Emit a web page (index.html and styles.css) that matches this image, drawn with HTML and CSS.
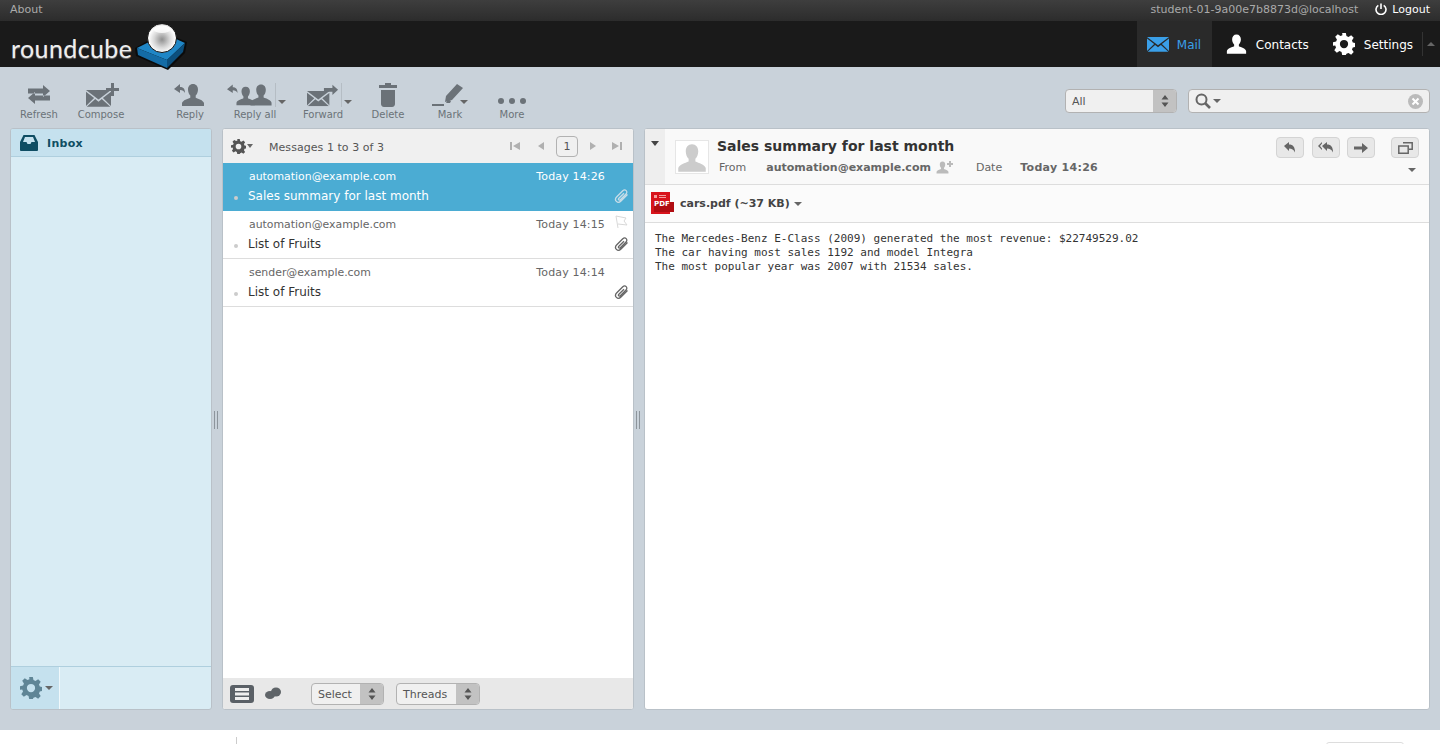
FILE: index.html
```html
<!DOCTYPE html>
<html lang="en">
<head>
    <meta charset="UTF-8">
    <title>Roundcube Webmail :: Inbox</title>
    <link rel="stylesheet" href="styles.css">
</head>
<body>

<svg class="defs" width="0" height="0">
    <defs>
        <symbol id="person" viewBox="0 0 24 24">
            <path d="M12 1c3.200 0 5 2.400 5 5.500 0 2.600-1 4.800-2.300 6v2.200c2.800 1.200 7.300 2.300 8.300 5.300v3H1v-3c1-3 5.500-4.100 8.300-5.300v-2.200C8 11.300 7 9.100 7 6.500 7 3.400 8.800 1 12 1z"/>
        </symbol>
        <symbol id="envelope" viewBox="0 0 34 24">
            <path d="M0 1h34L17 14z"/>
            <path d="M0 3.500V23l11-11zM34 3.500V23L23 12zM12.500 13.500L17 17l4.500-3.500L33 24H1z"/>
        </symbol>
        <symbol id="gear" viewBox="0 0 24 24">
            <path d="M10 0h4l.7 3.400 2.200.9 2.900-1.900 2.800 2.800-1.900 2.900.9 2.200 3.400.7v4l-3.400.7-.9 2.200 1.900 2.900-2.800 2.800-2.900-1.900-2.200.9L14 24h-4l-.7-3.400-2.200-.9-2.900 1.900-2.800-2.800 1.900-2.900-.9-2.200L0 14v-4l3.400-.7.900-2.200-1.900-2.900 2.800-2.800 2.900 1.900 2.200-.9zM12 7.500a4.500 4.500 0 1 0 0 9 4.500 4.500 0 0 0 0-9z" fill-rule="evenodd"/>
        </symbol>
        <symbol id="clip" viewBox="0 0 16 16">
            <path d="M13.500 6.500L7 13c-1.500 1.500-3.500 1.500-4.600.4S1.300 10.300 2.800 8.800l6-6c1-1 2.500-1.100 3.400-.2s.8 2.400-.2 3.400L6.300 11.700c-.5.5-1.200.6-1.600.2s-.3-1.100.2-1.600L10 5.200" fill="none" stroke="currentColor" stroke-width="1.300"/>
        </symbol>
        <symbol id="stepper" viewBox="0 0 8 12">
            <path d="M4 0l3.500 4.500h-7zM4 12L.5 7.500h7z"/>
        </symbol>
    </defs>
</svg>

<div class="topline">
    <a class="topline-link">About</a>
    <div class="topline-right">
        <span class="username">student-01-9a00e7b8873d@localhost</span>
        <a class="logout">
            <svg width="12" height="12" viewBox="0 0 12 12"><path d="M3.300 2.300a5 5 0 1 0 5.400 0M6 .5v5.500" fill="none" stroke="#fff" stroke-width="1.600"/></svg>
            Logout
        </a>
    </div>
</div>

<header class="header">
    <div class="logo">
        <span class="logo-text">roundcube</span>
        <svg class="logo-cube" width="52" height="50" viewBox="0 0 52 50">
            <defs>
                <radialGradient id="ball" cx="0.5" cy="0.55" r="0.55">
                    <stop offset="0" stop-color="#8f8f8f"/>
                    <stop offset="0.5" stop-color="#d8d8d8"/>
                    <stop offset="0.85" stop-color="#ffffff"/>
                    <stop offset="1" stop-color="#b0b0b0"/>
                </radialGradient>
            </defs>
            <path d="M0 24L28 8 52 18 50 29 33 46 1 32z" fill="#0b0b0b"/>
            <path d="M2 24L30 10 50 19 32 36z" fill="#1f86c6"/>
            <path d="M2 24L32 36 32 44 3 31z" fill="#146ca6"/>
            <path d="M32 36L50 19 48 28 32 44z" fill="#0c4f7d"/>
            <circle cx="27" cy="14" r="14.500" fill="url(#ball)" stroke="#111" stroke-width="1"/>
            <ellipse cx="27" cy="6" rx="8" ry="3" fill="#ffffff" opacity="0.75"/>
        </svg>
    </div>
    <nav class="taskbar">
        <a class="task task-mail">
            <svg width="22" height="16"><use href="#envelope"/></svg>
            Mail
        </a>
        <a class="task task-contacts">
            <svg width="21" height="22"><use href="#person"/></svg>
            Contacts
        </a>
        <a class="task task-settings">
            <svg width="22" height="22"><use href="#gear"/></svg>
            Settings
        </a>
        <span class="task-toggle"></span>
    </nav>
</header>

<div class="toolbar">
    <div class="toolbar-group">
        <a class="tool">
            <svg width="26" height="24" viewBox="0 0 26 24"><path d="M2 5.500h15V2l7 6-7 6v-3.500H2zM24 12.500H9V9L2 15l7 6v-3.500h15z"/></svg>
            Refresh
        </a>
        <a class="tool">
            <svg class="compose-icon" width="34" height="24" viewBox="0 0 34 24"><use href="#envelope" x="0" y="6" width="25" height="18"/><path d="M25 0h3v5h5v3h-5v5h-3V8h-5V5h5z"/></svg>
            Compose
        </a>
    </div>
    <div class="toolbar-group toolbar-mail">
        <a class="tool">
            <svg width="32" height="24" viewBox="0 0 32 24"><use href="#person" x="6" y="0" width="26" height="24"/><path d="M0 6l6-5v3c3 0 5 1.500 5 6-1-2-2.500-3-5-3v3z"/></svg>
            Reply
        </a>
        <a class="tool tool-wide">
            <span class="tool-row tool-row-replyall">
                <svg width="46" height="24" viewBox="0 0 48 24"><use href="#person" x="9" y="2" width="21" height="22"/><use href="#person" x="23" y="0" width="25" height="24"/><path d="M0 6l6-5v3c3 0 5 1.500 5 6-1-2-2.500-3-5-3v3z"/></svg>
                <i class="tool-sep"></i>
                <i class="caret tool-caret"></i>
            </span>
            Reply all
        </a>
        <a class="tool tool-wide">
            <span class="tool-row tool-row-forward">
                <svg width="32" height="24" viewBox="0 0 34 24"><use href="#envelope" x="0" y="7" width="24" height="17"/><path d="M18 4.500h9V1l6 5.500-6 5.500V8.500h-9z"/></svg>
                <i class="tool-sep"></i>
                <i class="caret tool-caret"></i>
            </span>
            Forward
        </a>
        <a class="tool">
            <svg width="20" height="24" viewBox="0 0 20 24"><path d="M7 0h6v2h6v3H1V2h6zM3 7h14v14c0 1.500-1 3-3 3H6c-2 0-3-1.500-3-3z"/></svg>
            Delete
        </a>
        <a class="tool">
            <span class="tool-row tool-row-mark">
                <svg width="34" height="24" viewBox="0 0 34 24"><path d="M0 21h12v2H0zM13 19l1-6L25 1l6 4-11 12zM14 20l2-3 3 1-1 2z"/></svg>
                <i class="caret tool-caret"></i>
            </span>
            Mark
        </a>
        <a class="tool">
            <svg width="30" height="24" viewBox="0 0 30 24"><circle cx="4" cy="18" r="3"/><circle cx="15" cy="18" r="3"/><circle cx="26" cy="18" r="3"/></svg>
            More
        </a>
    </div>
    <div class="toolbar-search">
        <div class="select select-filter">
            <span class="select-value">All</span>
            <span class="select-arrows"><svg width="8" height="12"><use href="#stepper"/></svg></span>
        </div>
        <div class="searchbox">
            <svg width="17" height="16" viewBox="0 0 17 16"><circle cx="6.500" cy="6.500" r="5" fill="none" stroke="#666" stroke-width="2"/><path d="M10 10l5 5" stroke="#666" stroke-width="2.600"/></svg>
            <i class="caret"></i>
            <span class="search-reset">
                <svg width="15" height="15" viewBox="0 0 15 15"><circle cx="7.500" cy="7.500" r="7.500" fill="#bbb"/><path d="M4.500 4.500l6 6M10.500 4.500l-6 6" stroke="#fff" stroke-width="2"/></svg>
            </span>
        </div>
    </div>
</div>

<main class="main">
    <aside class="panel folders">
        <div class="folder-row">
            <svg width="18" height="16" viewBox="0 0 18 16"><path d="M3.500 0h11L18 7v8c0 .5-.5 1-1 1H1c-.5 0-1-.5-1-1V7zM5 2L3 7h3.500l1 2h3l1-2H15l-2-5z" fill="#0f4d63" fill-rule="evenodd"/></svg>
            <span class="folder-name">Inbox</span>
        </div>
        <div class="grow"></div>
        <div class="folders-footer">
            <a class="folders-gear">
                <svg width="22" height="22"><use href="#gear"/></svg>
                <i class="caret"></i>
            </a>
        </div>
    </aside>

    <div class="splitter"><i></i></div>

    <section class="panel list">
        <div class="list-header">
            <svg class="list-gear" width="15" height="15"><use href="#gear"/></svg>
            <i class="caret"></i>
            <span class="list-count">Messages 1 to 3 of 3</span>
            <div class="pager">
                <svg width="10" height="10" viewBox="0 0 10 10"><path d="M0 1h2v8H0zM10 1v8L3 5z"/></svg>
                <svg class="pager-prev" width="8" height="10" viewBox="0 0 8 10"><path d="M7 1v8L1 5z"/></svg>
                <span class="page-num">1</span>
                <svg width="8" height="10" viewBox="0 0 8 10"><path d="M1 1v8l6-4z"/></svg>
                <svg class="pager-last" width="10" height="10" viewBox="0 0 10 10"><path d="M10 1H8v8h2zM0 1v8l7-4z"/></svg>
            </div>
        </div>
        <div class="messages">
            <div class="message selected">
                <div class="message-top">
                    <span class="sender">automation@example.com</span>
                    <span class="date">Today 14:26</span>
                </div>
                <div class="message-bottom">
                    <i class="dot"></i>
                    <span class="subject">Sales summary for last month</span>
                    <svg class="clip" width="16" height="16"><use href="#clip"/></svg>
                </div>
            </div>
            <div class="message">
                <div class="message-top">
                    <span class="sender">automation@example.com</span>
                    <span class="date">Today 14:15</span>
                    <svg class="flag" width="14" height="14" viewBox="0 0 14 14"><path d="M2 1l10 2-2 3 3 4-9-1M2 1l2 12" fill="none" stroke="#d8d8d8"/></svg>
                </div>
                <div class="message-bottom">
                    <i class="dot"></i>
                    <span class="subject">List of Fruits</span>
                    <svg class="clip" width="16" height="16"><use href="#clip"/></svg>
                </div>
            </div>
            <div class="message">
                <div class="message-top">
                    <span class="sender">sender@example.com</span>
                    <span class="date">Today 14:14</span>
                </div>
                <div class="message-bottom">
                    <i class="dot"></i>
                    <span class="subject">List of Fruits</span>
                    <svg class="clip" width="16" height="16"><use href="#clip"/></svg>
                </div>
            </div>
        </div>
        <div class="list-footer">
            <span class="view-list">
                <svg width="14" height="12" viewBox="0 0 14 12"><path d="M0 0h14v3H0zM0 4.500h14v3H0zM0 9h14v3H0z" fill="#eee"/></svg>
            </span>
            <svg class="view-thread" width="16" height="13" viewBox="0 0 16 13"><ellipse cx="5" cy="8" rx="5" ry="4"/><ellipse cx="11" cy="5" rx="5" ry="4.500"/></svg>
            <div class="select select-small select-select">
                <span class="select-value">Select</span>
                <span class="select-arrows"><svg width="8" height="12"><use href="#stepper"/></svg></span>
            </div>
            <div class="select select-small select-threads">
                <span class="select-value">Threads</span>
                <span class="select-arrows"><svg width="8" height="12"><use href="#stepper"/></svg></span>
            </div>
        </div>
    </section>

    <div class="splitter"><i></i></div>

    <section class="panel content">
        <div class="mail-header">
            <div class="collapse"><i class="caret caret-dark"></i></div>
            <div class="photo">
                <svg width="30" height="30" viewBox="0 0 24 24"><use href="#person" fill="#ccc"/></svg>
            </div>
            <div class="mail-meta">
                <h2 class="mail-subject">Sales summary for last month</h2>
                <div class="mail-from">
                    <span class="meta-label">From</span>
                    <span class="meta-value meta-sender">automation@example.com</span>
                    <svg class="add-contact" width="18" height="15" viewBox="0 0 18 15"><use href="#person" width="13" height="15"/><path d="M13 1h2v2h2v2h-2v2h-2V5h-2V3h2z"/></svg>
                    <span class="meta-label meta-date">Date</span>
                    <span class="meta-value meta-when">Today 14:26</span>
                </div>
            </div>
            <div class="mail-actions">
                <div class="mail-buttons">
                    <a class="action"><svg width="12" height="11" viewBox="0 0 12 11"><path d="M0 4l5-4v2.500c4 0 6 2.500 6 8-1.500-3-3-4-6-4V9z"/></svg></a>
                    <a class="action"><svg width="16" height="11" viewBox="0 0 16 11"><path d="M0 4l4-4v1.500L2 4l2 2.500V8zM4 4l5-4v2.500c4 0 6 2.500 6 8-1.500-3-3-4-6-4V9z"/></svg></a>
                    <a class="action action-forward"><svg width="14" height="10" viewBox="0 0 14 10"><path d="M0 3.500h8V0l6 5-6 5V6.500H0z"/></svg></a>
                    <a class="action action-open"><svg width="15" height="12" viewBox="0 0 15 12"><path d="M5 .8h9.200v6.500H11M.8 4H10.200v7.200H.8z" fill="none" stroke="#666" stroke-width="1.500"/></svg></a>
                </div>
                <i class="caret more-headers"></i>
            </div>
        </div>
        <div class="attachment">
            <svg width="23" height="23" viewBox="0 0 23 23">
                <path d="M0 0h19v22H0z" fill="#d8141c"/>
                <path d="M3 3h3v3H3zM8 3h7v1H8zM8 5h7v1H8z" fill="#f3a0a0"/>
                <path d="M3 10h20v10H3z" fill="#b00d12"/>
            </svg>
            <span class="pdf-tag">PDF</span>
            <span class="attachment-name">cars.pdf (~37 KB)</span>
            <i class="caret"></i>
        </div>
        <pre class="mail-body">The Mercedes-Benz E-Class (2009) generated the most revenue: $22749529.02
The car having most sales 1192 and model Integra
The most popular year was 2007 with 21534 sales.</pre>
    </section>
</main>

<div class="page-bottom">
    <i class="bottom-line"></i>
    <i class="bottom-button"></i>
</div>

</body>
</html>
```

FILE: styles.css
```css
/* General */
html, body {
    height: 100%;
}

body {
    margin: 0;
    background-color: #c9d2da;
    color: #333;
    font-family: "DejaVu Sans", Verdana, sans-serif;
    font-size: 11px;
    overflow: hidden;
    display: flex;
    flex-direction: column;
}

svg {
    display: block;
    fill: currentColor;
}

.defs {
    position: absolute;
}

.grow {
    flex: 1;
}

.caret {
    display: block;
    width: 0;
    height: 0;
    border-left: 4px solid transparent;
    border-right: 4px solid transparent;
    border-top: 4px solid #666;
}

/* Top line */
.topline {
    height: 21px;
    box-sizing: border-box;
    padding: 0 10px 3px;
    display: flex;
    justify-content: space-between;
    align-items: center;
    background: linear-gradient(#3e3e3e, #2c2c2c);
    color: #aaa;
    flex-shrink: 0;
}

.topline-right {
    display: flex;
    align-items: center;
    gap: 17px;
}

.logout {
    display: flex;
    align-items: center;
    gap: 5px;
    color: #fff;
}

/* Header */
.header {
    height: 46px;
    background-color: #1a1a1a;
    display: flex;
    justify-content: space-between;
    flex-shrink: 0;
    position: relative;
}

.logo {
    display: flex;
    padding-left: 11px;
    align-items: center;
    color: #eee;
}

.logo-text {
    font-family: Lato, sans-serif;
    font-weight: 400;
    font-size: 25px;
    letter-spacing: 0.4px;
    margin-top: 7px;
    text-shadow: 0 1px 1px #777;
}

.logo-cube {
    position: absolute;
    left: 135px;
    top: 3px;
    z-index: 1;
}

.taskbar {
    display: flex;
    color: #fff;
    font-size: 12px;
}

.task {
    display: flex;
    align-items: center;
    padding-top: 2px;
}

.task svg {
    margin-top: -2px;
}

.task-mail {
    width: 75px;
    box-sizing: border-box;
    padding-left: 10px;
    gap: 8px;
    background-color: #2a2a2a;
    color: #3a9fe8;
}

.task-contacts {
    padding-left: 14px;
    gap: 9px;
}

.task-settings {
    margin-left: 24px;
    gap: 9px;
}

.task-toggle {
    width: 17px;
    margin: 11px 0 11px 9px;
    position: relative;
    border-left: 1px solid #333;
}

.task-toggle::after {
    content: "";
    position: absolute;
    left: 4px;
    top: 10px;
    border-left: 4px solid transparent;
    border-right: 4px solid transparent;
    border-bottom: 4px solid #666;
}

/* Toolbar */
.toolbar {
    height: 61px;
    padding-left: 8px;
    padding-right: 10px;
    display: flex;
    flex-shrink: 0;
    color: #6b7278;
}

.toolbar-group {
    display: flex;
}

.toolbar-mail {
    margin-left: 27px;
}

.tool {
    width: 62px;
    height: 61px;
    box-sizing: border-box;
    padding-top: 16px;
    display: flex;
    flex-direction: column;
    align-items: center;
    gap: 2px;
    font-size: 10px;
}

.tool-wide {
    width: 68px;
}

.compose-icon {
    margin-left: 4px;
}

.tool-row {
    display: flex;
    position: relative;
}

.tool-row-replyall {
    margin-left: 2px;
}

.tool-row-forward {
    margin-left: 12px;
}

.tool-sep {
    display: block;
    width: 1px;
    height: 24px;
    background-color: #b5bdc4;
    margin-left: 2px;
}

.tool-caret {
    margin-left: 2px;
    align-self: flex-end;
    margin-bottom: 3px;
}

.tool-row-mark .tool-caret {
    margin-left: -6px;
}

.toolbar-search {
    margin-left: auto;
    display: flex;
    gap: 11px;
    padding-top: 22px;
    align-items: flex-start;
}

/* Selects */
.select {
    display: flex;
    box-sizing: border-box;
    height: 24px;
    border: 1px solid #b2b2b2;
    border-radius: 4px;
    background-color: #f0f0f0;
    overflow: hidden;
    color: #555;
}

.select-filter {
    width: 112px;
}

.select-value {
    flex: 1;
    padding-left: 6px;
    line-height: 23px;
}

.select-arrows {
    width: 23px;
    background-color: #c2c2c2;
    display: flex;
    align-items: center;
    justify-content: center;
    color: #555;
}

.searchbox {
    width: 242px;
    height: 24px;
    box-sizing: border-box;
    border: 1px solid #b2b2b2;
    border-radius: 4px;
    background-color: #f0f0f0;
    display: flex;
    align-items: center;
    padding-left: 6px;
    gap: 1px;
}

.search-reset {
    margin-left: auto;
    margin-right: 6px;
}

/* Panels */
.main {
    height: 582px;
    padding: 0 10px;
    display: flex;
    flex-shrink: 0;
}

.panel {
    box-sizing: border-box;
    border: 1px solid #b9c1c8;
    border-radius: 3px;
    display: flex;
    flex-direction: column;
    overflow: hidden;
    background-color: #fff;
}

.splitter {
    width: 10px;
    padding-top: 2px;
    box-sizing: border-box;
    display: flex;
    align-items: center;
    justify-content: center;
}

.splitter i {
    display: block;
    width: 2px;
    height: 18px;
    margin-right: 3px;
    border-left: 1px solid #8d959c;
    border-right: 1px solid #8d959c;
}

/* Folders */
.folders {
    width: 202px;
    background-color: #d9ecf4;
}

.folder-row {
    height: 28px;
    background-color: #c5e1ee;
    border-bottom: 1px solid #afcfde;
    box-sizing: border-box;
    display: flex;
    align-items: center;
    gap: 9px;
    padding-left: 9px;
    color: #0f4d63;
    font-weight: bold;
}

.folder-name {
    letter-spacing: 0.3px;
    padding-top: 2px;
}

.folders-footer {
    height: 43px;
    border-top: 1px solid #afcfde;
    box-sizing: border-box;
    flex-shrink: 0;
}

.folders-gear {
    width: 49px;
    height: 100%;
    background-color: #c5e1ee;
    border-right: 1px solid #f0f8fb;
    box-sizing: border-box;
    display: flex;
    align-items: center;
    padding-left: 9px;
    gap: 3px;
    color: #5f8596;
}

/* Message list */
.list {
    width: 412px;
}

.list-header {
    height: 34px;
    flex-shrink: 0;
    background-color: #f0f0f0;
    display: flex;
    align-items: center;
    padding-left: 8px;
    color: #555;
}

.list-gear {
    margin-right: 1px;
}

.list-header .caret {
    border-left-width: 3.500px;
    border-right-width: 3.500px;
}

.list-count {
    margin-left: 16px;
    padding-top: 2px;
    letter-spacing: 0.05px;
}

.pager {
    margin-left: auto;
    margin-right: 11px;
    display: flex;
    align-items: center;
    color: #b0b0b0;
}

.pager-prev {
    margin: 0 11px 0 17px;
}

.pager-last {
    margin-left: 15px;
}

.page-num {
    width: 22px;
    height: 21px;
    border: 1px solid #b2b2b2;
    border-radius: 4px;
    box-sizing: border-box;
    text-align: center;
    line-height: 20px;
    color: #555;
    margin-right: 11px;
}

.messages {
    flex: 1;
}

.message {
    height: 48px;
    box-sizing: border-box;
    border-bottom: 1px solid #ddd;
    padding-top: 6px;
    color: #666;
}

.message-top {
    display: flex;
    align-items: center;
    position: relative;
    padding-left: 26px;
    line-height: 14px;
    font-size: 10.9px;
}

.date {
    margin-left: auto;
    margin-right: 28px;
    padding-top: 1px;
    font-size: 11px;
    letter-spacing: 0.15px;
}

.flag {
    position: absolute;
    right: 5px;
    top: -2px;
}

.message-bottom {
    display: flex;
    align-items: center;
    margin-top: 3px;
    padding-left: 11px;
}

.dot {
    display: block;
    width: 4px;
    height: 4px;
    border-radius: 50%;
    background-color: #ccc;
    margin-top: 4px;
}

.subject {
    margin-left: 10px;
    font-size: 12px;
    color: #333;
    line-height: 18px;
}

.clip {
    margin-left: auto;
    margin-right: 3px;
    color: #666;
}

.selected {
    background-color: #4bacd3;
    color: #fff;
    border-bottom-color: #4bacd3;
}

.selected .subject {
    color: #fff;
}

.selected .clip {
    color: #c7dde8;
}

.list-footer {
    height: 31px;
    flex-shrink: 0;
    background-color: #e8e8e8;
    display: flex;
    align-items: center;
    padding-left: 7px;
    color: #5f6468;
}

.view-list {
    width: 24px;
    height: 18px;
    background-color: #5a6066;
    border-radius: 3px;
    display: flex;
    align-items: center;
    justify-content: center;
}

.view-thread {
    margin-left: 11px;
}

.select-small {
    height: 22px;
}

.select-small .select-value {
    line-height: 21px;
}

.select-select {
    width: 73px;
    margin-left: 30px;
}

.select-threads {
    width: 84px;
    margin-left: 12px;
}

/* Message content */
.content {
    width: 786px;
}

.mail-header {
    flex-shrink: 0;
    display: flex;
    background-color: #f9f9f9;
    border-bottom: 1px solid #ddd;
    box-sizing: border-box;
    height: 56px;
}

.collapse {
    width: 20px;
    background-color: #eee;
    padding: 12px 0 0 6px;
    box-sizing: border-box;
}

.caret-dark {
    border-top-color: #444;
    border-top-width: 5px;
}

.photo {
    width: 34px;
    height: 34px;
    box-sizing: border-box;
    margin: 11px 8px 0 10px;
    border: 1px solid #e6e6e6;
    background-color: #fff;
    display: flex;
    align-items: flex-end;
    justify-content: center;
}

.mail-meta {
    flex: 1;
    padding-top: 8px;
}

.mail-subject {
    margin: 0;
    font-size: 14px;
    line-height: 18px;
    color: #333;
    font-weight: bold;
}

.mail-from {
    display: flex;
    align-items: center;
    margin-top: 5px;
    margin-left: 2px;
    color: #666;
}

.meta-sender {
    margin-left: 20px;
}

.meta-value {
    font-weight: bold;
}

.meta-when {
    letter-spacing: 0.3px;
}

.add-contact {
    margin-left: 5px;
    color: #bbb;
}

.meta-date {
    margin-left: 22px;
    margin-right: 18px;
}

.mail-actions {
    width: 160px;
    position: relative;
}

.mail-buttons {
    display: flex;
    gap: 8px;
    padding-top: 8px;
    padding-left: 7px;
}

.action {
    width: 28px;
    height: 21px;
    box-sizing: border-box;
    border: 1px solid #d4d4d4;
    border-radius: 4px;
    background-color: #e8e8e8;
    display: flex;
    align-items: center;
    justify-content: center;
    color: #666;
}

.action-forward {
    margin-left: -1px;
}

.action-open {
    margin-left: 8px;
}

.more-headers {
    position: absolute;
    right: 13px;
    top: 39px;
}

.attachment {
    height: 38px;
    box-sizing: border-box;
    flex-shrink: 0;
    border-bottom: 1px solid #ddd;
    background-color: #fbfbfb;
    display: flex;
    align-items: center;
    padding-left: 6px;
    position: relative;
    color: #444;
    font-weight: bold;
}

.pdf-tag {
    position: absolute;
    left: 9px;
    top: 14px;
    color: #fff;
    font-size: 7px;
    line-height: 10px;
}

.attachment-name {
    margin-left: 6px;
    margin-right: 4px;
}

.mail-body {
    margin: 0;
    padding: 9px 10px;
    font-family: "DejaVu Sans Mono", monospace;
    font-size: 11px;
    line-height: 14px;
    color: #333;
}

/* Page bottom strip */
.page-bottom {
    flex: 1;
    margin-top: 20px;
    background-color: #fff;
    position: relative;
}

.bottom-line {
    position: absolute;
    left: 236px;
    top: 7px;
    width: 1px;
    height: 7px;
    background-color: #ccc;
}

.bottom-button {
    position: absolute;
    left: 1326px;
    top: 12px;
    width: 76px;
    height: 4px;
    border: 1px solid #ddd;
    border-radius: 3px;
}
```
